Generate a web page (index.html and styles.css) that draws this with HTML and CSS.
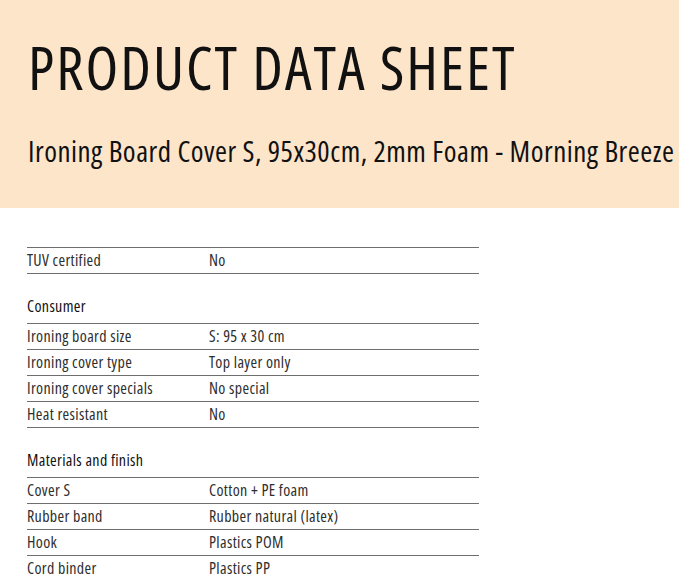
FILE: index.html
```html
<!DOCTYPE html>
<html lang="en">
<head>
<meta charset="utf-8">
<title>Product Data Sheet</title>
<link rel="stylesheet" href="styles.css">
</head>
<body>
<header class="hero">
  <h1 class="title">PRODUCT DATA SHEET</h1>
  <p class="subtitle">Ironing Board Cover S, 95x30cm, 2mm Foam - Morning Breeze</p>
</header>
<main class="sheet">
  <section class="group group-first">
    <div class="rows">
      <div class="row"><span class="label">TUV certified</span><span class="value">No</span></div>
    </div>
  </section>
  <section class="group">
    <h2 class="group-title">Consumer</h2>
    <div class="rows">
      <div class="row"><span class="label">Ironing board size</span><span class="value">S: 95 x 30 cm</span></div>
      <div class="row"><span class="label">Ironing cover type</span><span class="value">Top layer only</span></div>
      <div class="row"><span class="label">Ironing cover specials</span><span class="value">No special</span></div>
      <div class="row"><span class="label">Heat resistant</span><span class="value">No</span></div>
    </div>
  </section>
  <section class="group">
    <h2 class="group-title">Materials and finish</h2>
    <div class="rows">
      <div class="row"><span class="label">Cover S</span><span class="value">Cotton + PE foam</span></div>
      <div class="row"><span class="label">Rubber band</span><span class="value">Rubber natural (latex)</span></div>
      <div class="row"><span class="label">Hook</span><span class="value">Plastics POM</span></div>
      <div class="row"><span class="label">Cord binder</span><span class="value">Plastics PP</span></div>
    </div>
  </section>
</main>
</body>
</html>
```
FILE: styles.css
```css
* { box-sizing: border-box; }

html, body {
  margin: 0;
  padding: 0;
  background: #ffffff;
}

body {
  font-family: "Open Sans", "Liberation Sans", sans-serif;
  font-stretch: 75%;
  color: #111111;
  overflow: hidden;
}

.hero {
  background: #fde5ca;
  height: 208px;
  padding: 38px 0 0 28px;
}

.title {
  margin: 0;
  font-size: 60px;
  line-height: 58px;
  font-weight: normal;
  letter-spacing: 2px;
  color: #111111;
}

.subtitle {
  margin: 39px 0 0 0;
  font-size: 29px;
  line-height: 32px;
  letter-spacing: 0.5px;
  color: #111111;
  white-space: nowrap;
}

.sheet {
  margin: 39px 0 0 27px;
  width: 452px;
}

.group-title {
  margin: 22px 0 7px 0;
  font-size: 16px;
  line-height: 20px;
  font-weight: normal;
  letter-spacing: 0.35px;
  color: #111111;
}

.rows {
  border-top: 1px solid #6e6e6e;
}

.row {
  display: grid;
  grid-template-columns: 182px 1fr;
  align-items: center;
  height: 26px;
  border-bottom: 1px solid #6e6e6e;
  font-size: 16px;
  line-height: 25px;
  letter-spacing: 0.35px;
  color: #2e2e2e;
}
```
